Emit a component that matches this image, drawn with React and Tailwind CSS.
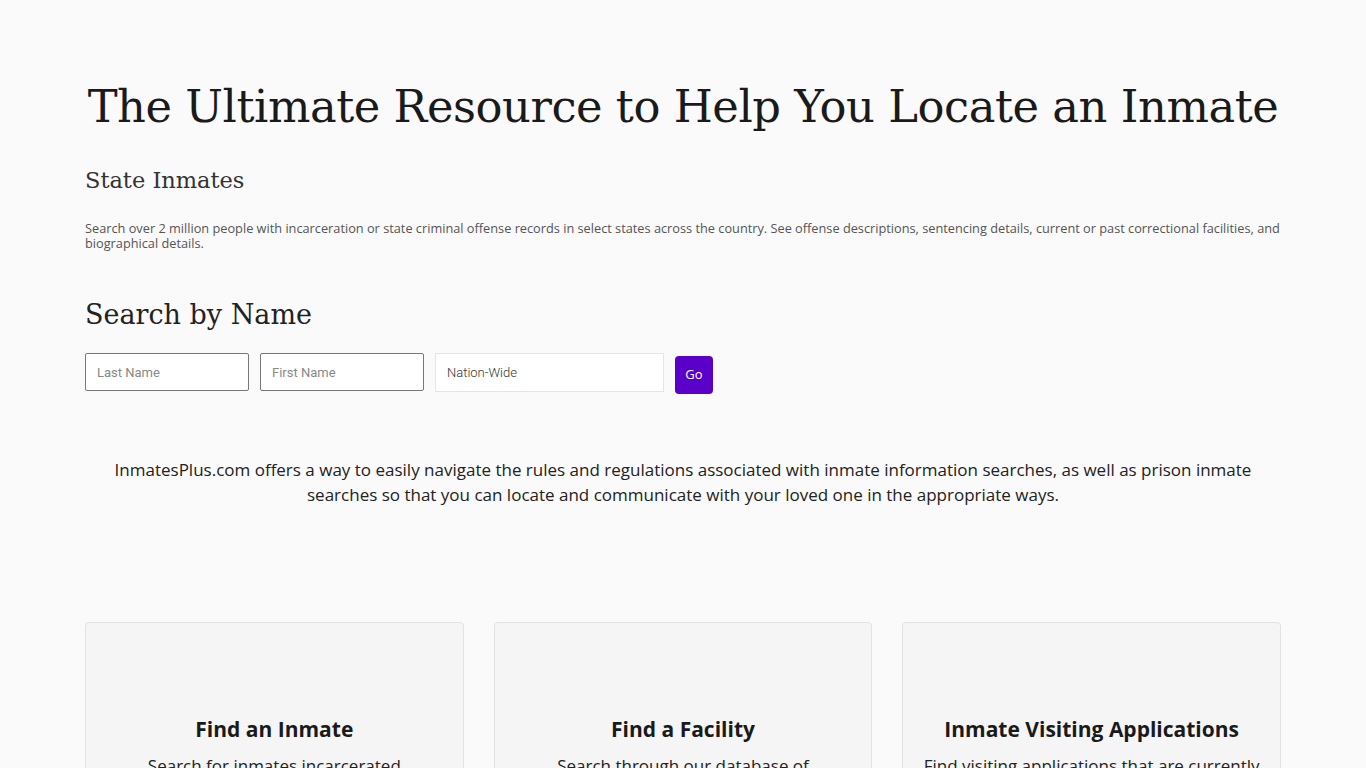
const CARDS = [
  { title: 'Find an Inmate', text: 'Search for inmates incarcerated nationwide in federal, state and county facilities.' },
  { title: 'Find a Facility', text: 'Search through our database of correctional facilities across the country.' },
  { title: 'Inmate Visiting Applications', text: 'Find visiting applications that are currently available for each state.' },
]

const slab = "font-['DejaVu_Serif',serif]"
const sans = "font-['Open_Sans',sans-serif]"

export default function App() {
  return (
    <div className="min-h-screen bg-[#fafafa] text-[#1a1a1a]">
      <div className="w-[1196px] mx-auto pt-[78px]">
        {/* Hero heading */}
        <div className="flex justify-center">
          <h1 className={`${slab} whitespace-nowrap text-[44.8px] leading-[58px] tracking-[-0.45px] text-[#1a1a1a]`}>
            The Ultimate Resource to Help You Locate an Inmate
          </h1>
        </div>

        <h2 className={`${slab} font-extralight text-[22.5px] leading-[32px] mt-[28px] text-[#333]`}>
          State Inmates
        </h2>
        <p className={`${sans} text-[12.75px] leading-[15px] text-[#555] mt-[25px]`}>
          Search over 2 million people with incarceration or state criminal offense records in select states across the country. See offense descriptions, sentencing details, current or past correctional facilities, and biographical details.
        </p>

        {/* Search form */}
        <h2 className={`${slab} font-extralight text-[27px] leading-[36px] mt-[46px] text-[#222]`}>
          Search by Name
        </h2>
        <div className="flex items-start gap-[11px] mt-[20px]">
          <input
            placeholder="Last Name"
            className="w-[164px] h-[38px] px-[11px] border border-[#777] rounded-[2px] bg-white font-['Roboto',sans-serif] text-[13px] placeholder:text-[#888] outline-none"
          />
          <input
            placeholder="First Name"
            className="w-[164px] h-[38px] px-[11px] border border-[#777] rounded-[2px] bg-white font-['Roboto',sans-serif] text-[13px] placeholder:text-[#888] outline-none"
          />
          <div className="w-[229px] h-[39px] px-[11px] flex items-center border border-[#e6e6e6] bg-white font-['Roboto',sans-serif] font-light text-[13px] text-[#333]">
            Nation-Wide
          </div>
          <button className={`${sans} w-[38px] h-[38px] mt-[3px] rounded-[4px] bg-[#5a00c8] text-white text-[13px]`}>
            Go
          </button>
        </div>

        <p className={`${sans} text-center text-[17px] leading-[25px] text-[#222] mt-[63px] px-[24px]`}>
          InmatesPlus.com offers a way to easily navigate the rules and regulations associated with inmate information searches, as well as prison inmate searches so that you can locate and communicate with your loved one in the appropriate ways.
        </p>

        {/* Feature cards */}
        <div className="grid grid-cols-3 gap-[30px] mt-[115px]">
          {CARDS.map(({ title, text }) => (
            <div key={title} className="bg-[#f5f5f5] border border-[#e2e2e2] rounded-[4px] pt-[90px] pb-10 px-[20px] text-center">
              <h3 className={`${sans} font-bold text-[21px] leading-[32px] text-[#1a1a1a]`}>{title}</h3>
              <p className={`${sans} text-[17px] leading-[25px] text-[#222] mt-[8px]`}>{text}</p>
            </div>
          ))}
        </div>
      </div>
    </div>
  )
}
